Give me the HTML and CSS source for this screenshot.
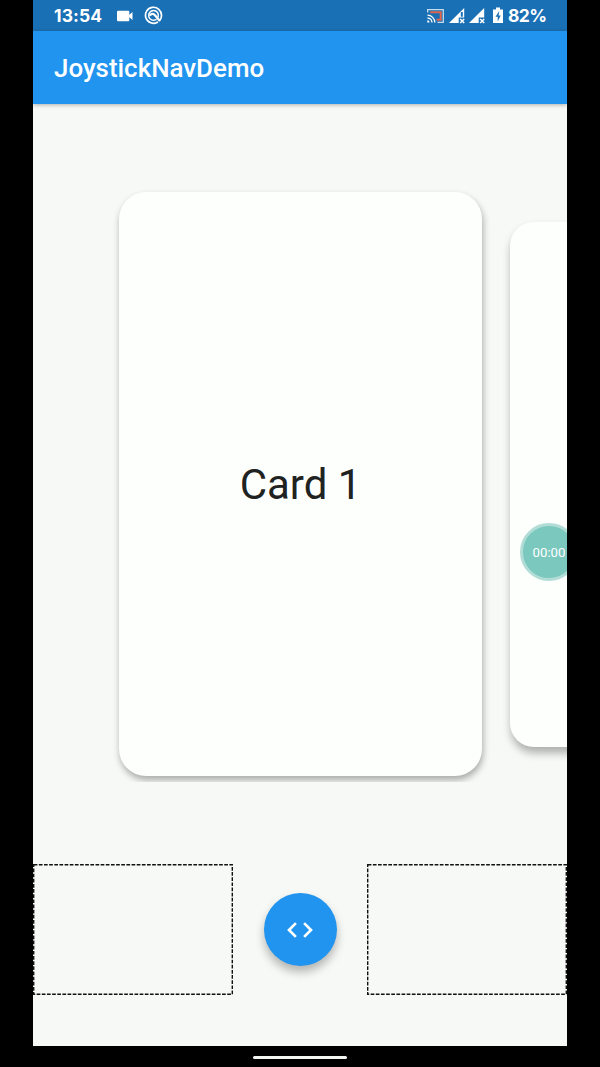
FILE: index.html
```html
<!DOCTYPE html>
<html lang="en">
<head>
<meta charset="utf-8">
<title>JoystickNavDemo</title>
<link rel="stylesheet" href="styles.css">
</head>
<body>
<div class="phone">
  <header class="status-bar">
    <span class="clock">13:54</span>
    <svg class="camera" width="17" height="12" viewBox="0 0 17 12"><path fill="#fff" d="M1 .7h10.300q1 0 1 1v3L15.500 2v8L12.300 7.300v3q0 1-1 1H1q-1 0-1-1V1.700q0-1 1-1z"/></svg>
    <svg class="swirl" width="19" height="19" viewBox="0 0 19 19" fill="none" stroke="#fff" stroke-linecap="round"><path d="M13.500 16.200A8 8 0 1 1 17.500 9.500Q17.500 12 16 14" stroke-width="1.700"/><path d="M12 13.600A4.900 4.900 0 1 1 14.200 10.800" stroke-width="1.500"/><path d="M6.300 8.800Q9 6.800 11 9.300L15.300 14.300" stroke-width="2.300"/></svg>
    <span class="spacer"></span>
    <svg class="cast" width="17" height="14" viewBox="0 0 17 14" fill="none"><path d="M.7 3.500V.7h15.600v12.600H10.500" stroke="#c5dcec" stroke-width="1.300"/><path d="M3.200 3.300h10.500v7.500H9.500" stroke="#e0654f" stroke-width="2"/><path d="M.5 6.200a7.300 7.300 0 0 1 7.300 7.300M.5 9a4.500 4.500 0 0 1 4.500 4.500" stroke="#fff" stroke-width="1.300"/><path d="M.3 11.300a2.300 2.300 0 0 1 2.300 2.300H.3z" fill="#fff"/></svg>
    <svg class="signal first" width="16" height="16" viewBox="0 0 16 16"><path fill="#fff" d="M0 15 15.200 0v9.500h-5.500V15z"/><path d="M12.800 4v4.700" stroke="#1a70b5" stroke-width="2"/><path d="m11.200 11 4 4m0-4-4 4" stroke="#fff" stroke-width="1.500"/></svg>
    <svg class="signal" width="16" height="16" viewBox="0 0 16 16"><path fill="#fff" d="M0 15 15.200 0v9.500h-5.500V15z"/><path d="m11.200 11 4 4m0-4-4 4" stroke="#fff" stroke-width="1.500"/></svg>
    <svg class="battery" width="10" height="17" viewBox="0 0 10 17"><path fill="#fff" d="M3 .5h4v2h3V16H0V2.500h3z"/><path fill="#1a70b5" d="M6.300 4 2.500 9.700h2.200V14.500L7.700 8.600H5.600z"/></svg>
    <span class="level">82%</span>
  </header>
  <div class="app-bar"><h1 class="title">JoystickNavDemo</h1></div>
  <main class="pager">
    <section class="card current">Card 1</section>
    <section class="card next"></section>
  </main>
  <footer class="controls">
    <svg class="zone" width="200" height="131"><rect x="0.700" y="0.700" width="198.600" height="129.600" fill="none" stroke="#111" stroke-width="1.400" stroke-dasharray="3.700 1.450"/></svg>
    <button class="joystick" aria-label="Navigate">
      <svg width="26" height="16" viewBox="0 0 26 16" fill="none" stroke="#fff" stroke-width="2.700"><path d="M8.900 1.100 2 8l6.900 6.900M17.100 1.100 24 8l-6.900 6.900"/></svg>
    </button>
    <svg class="zone" width="200" height="131"><rect x="0.700" y="0.700" width="198.600" height="129.600" fill="none" stroke="#111" stroke-width="1.400" stroke-dasharray="3.700 1.450"/></svg>
  </footer>
  <div class="recorder">00:00</div>
</div>
<div class="nav-bar"><div class="handle"></div></div>
</body>
</html>
```
FILE: styles.css
```css
* { box-sizing: border-box; }
body {
  margin: 0;
  height: 1067px;
  overflow: hidden;
  background: #000;
  font-family: Roboto, "Liberation Sans", sans-serif;
}
.phone {
  position: relative;
  display: flex;
  flex-direction: column;
  width: 534px;
  height: 1046px;
  margin: 0 auto;
  overflow: hidden;
  background: #f7f9f7;
}
.status-bar {
  display: flex;
  align-items: center;
  flex: 0 0 31px;
  padding: 0 21px;
  background: #1a70b5;
  color: #fff;
  font-family: Inter, Roboto, sans-serif;
  font-size: 17.500px;
  font-weight: 650;
  line-height: 31px;
}
.clock { width: 63px; letter-spacing: 0.1px; }
.swirl { margin-left: 10px; }
.spacer { flex: 1; }
.signal { margin-left: 4px; }
.signal.first { margin-left: 5px; }
.battery { margin-left: 8px; }
.level { margin-left: 5px; width: 38px; letter-spacing: -0.6px; white-space: nowrap; }
.app-bar {
  z-index: 1;
  display: flex;
  align-items: center;
  flex: 0 0 73px;
  padding-left: 21px;
  background: #2094ef;
  box-shadow: 0 1px 4px rgba(0, 0, 0, .3);
}
.title {
  margin: 0;
  padding-top: 1px;
  color: #fff;
  font-size: 25.900px;
  font-weight: 500;
  line-height: 30px;
}
.pager {
  display: flex;
  align-items: flex-start;
  gap: 28px;
  flex: 0 0 678px;
  padding: 88px 0 0 86px;
  overflow: hidden;
}
.card {
  display: flex;
  flex: none;
  align-items: center;
  justify-content: center;
  background: #fdfffd;
  color: #202221;
}
.current {
  width: 363px;
  height: 584px;
  border-radius: 27px;
  box-shadow: 1px 4px 7px rgba(0, 0, 0, .32);
  font-size: 42px;
}
.next {
  width: 327px;
  height: 525px;
  margin-top: 30px;
  border-radius: 24px;
  box-shadow: 1px 6px 9px rgba(0, 0, 0, .3);
}
.controls {
  display: flex;
  align-items: center;
  justify-content: space-between;
  padding-top: 82px;
}
.joystick {
  display: flex;
  align-items: center;
  justify-content: center;
  width: 73px;
  height: 73px;
  padding: 0;
  border: 0;
  border-radius: 50%;
  background: #2094ef;
  box-shadow: 0 6px 10px rgba(0, 0, 0, .28);
}
.recorder {
  position: absolute;
  top: 523px;
  left: 487px;
  width: 58px;
  height: 58px;
  border: 3px solid #b2dcd6;
  border-radius: 50%;
  background: #7bc8be;
  color: #fff;
  font-size: 13.200px;
  line-height: 53px;
  text-align: center;
}
.nav-bar { display: flex; justify-content: center; padding-top: 10px; }
.handle { width: 94px; height: 3px; border-radius: 2px; background: #f2f5f1; }
```
